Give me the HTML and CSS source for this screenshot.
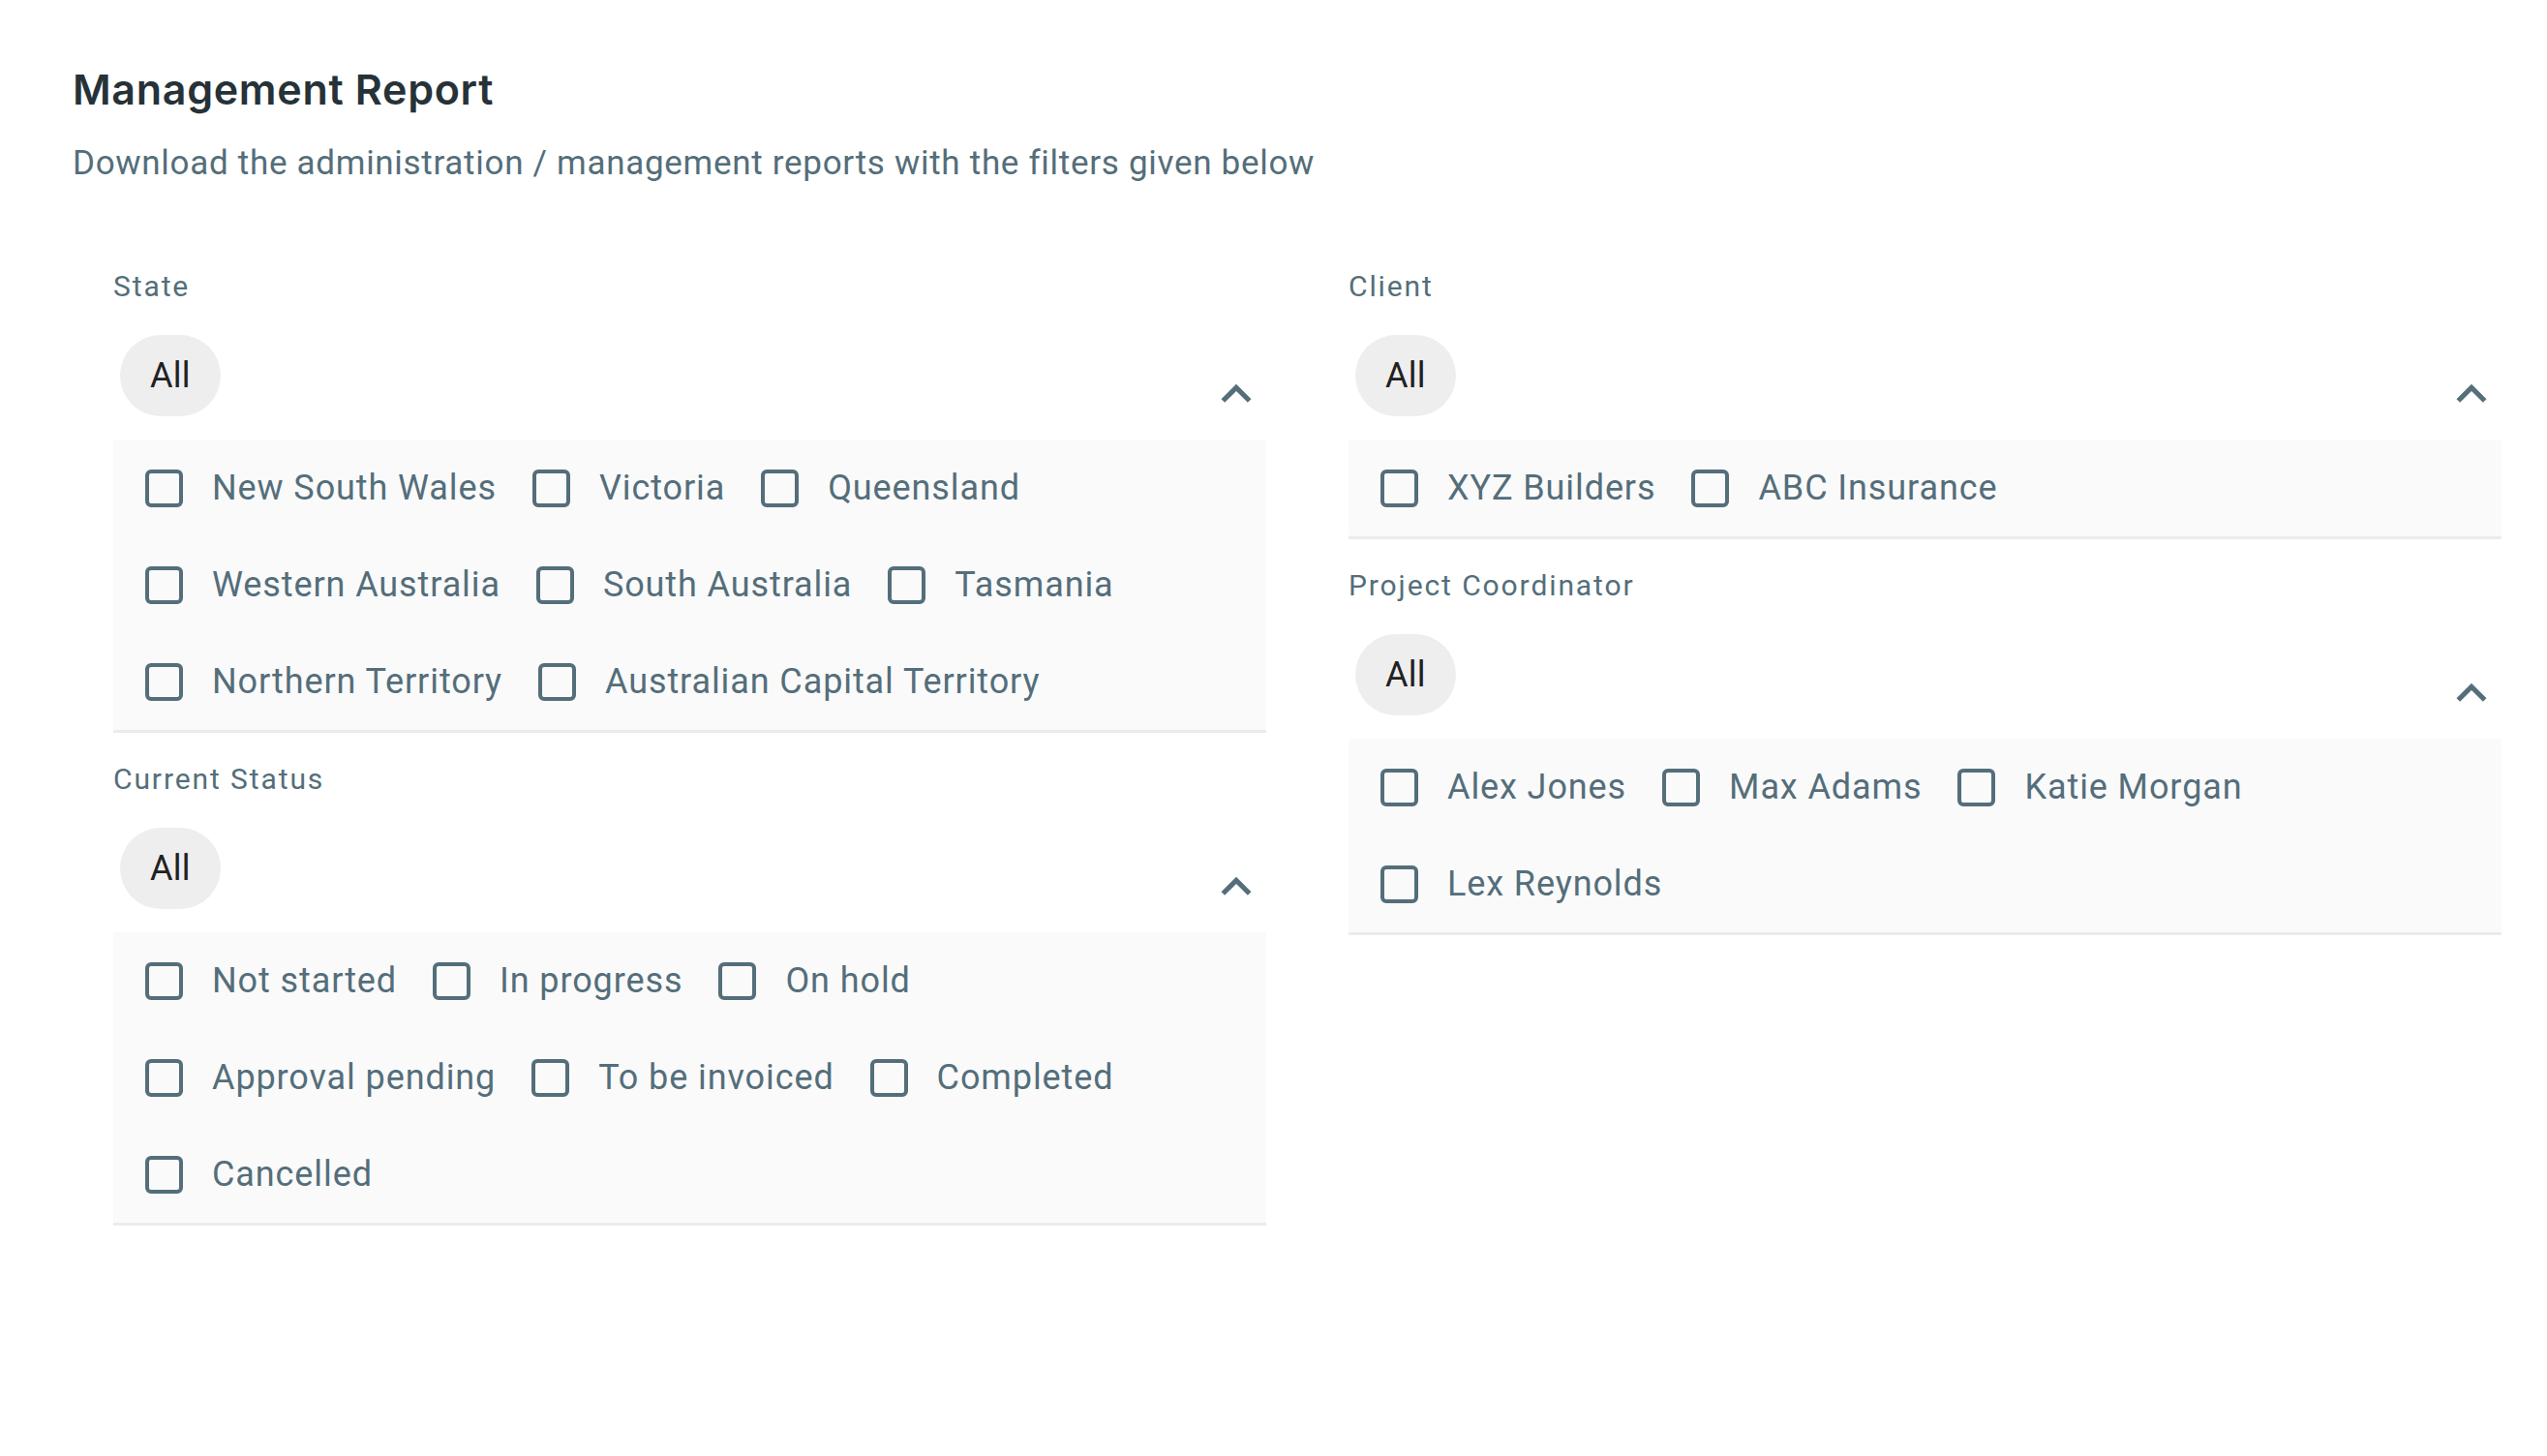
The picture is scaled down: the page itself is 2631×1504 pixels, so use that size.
FILE: index.html
```html
<!DOCTYPE html>
<html lang="en">
<head>
<meta charset="utf-8">
<title>Management Report</title>
<link rel="stylesheet" href="styles.css">
</head>
<body>
<main class="page">
  <header class="page-head">
    <h1 class="title">Management Report</h1>
    <p class="subtitle">Download the administration / management reports with the filters given below</p>
  </header>

  <div class="filters">
    <div class="column">
      <section class="filter">
        <div class="filter-label">State</div>
        <div class="filter-head">
          <span class="chip">All</span>
          <svg class="chevron" viewBox="0 0 24 24" aria-hidden="true"><path d="M12 8l-6 6 1.41 1.41L12 10.83l4.59 4.58L18 14z"/></svg>
        </div>
        <div class="options">
          <label class="option"><span class="box"></span><span class="text">New South Wales</span></label>
          <label class="option"><span class="box"></span><span class="text">Victoria</span></label>
          <label class="option"><span class="box"></span><span class="text">Queensland</span></label>
          <label class="option"><span class="box"></span><span class="text">Western Australia</span></label>
          <label class="option"><span class="box"></span><span class="text">South Australia</span></label>
          <label class="option"><span class="box"></span><span class="text">Tasmania</span></label>
          <label class="option"><span class="box"></span><span class="text">Northern Territory</span></label>
          <label class="option"><span class="box"></span><span class="text">Australian Capital Territory</span></label>
        </div>
      </section>

      <section class="filter">
        <div class="filter-label">Current Status</div>
        <div class="filter-head">
          <span class="chip">All</span>
          <svg class="chevron" viewBox="0 0 24 24" aria-hidden="true"><path d="M12 8l-6 6 1.41 1.41L12 10.83l4.59 4.58L18 14z"/></svg>
        </div>
        <div class="options">
          <label class="option"><span class="box"></span><span class="text">Not started</span></label>
          <label class="option"><span class="box"></span><span class="text">In progress</span></label>
          <label class="option"><span class="box"></span><span class="text">On hold</span></label>
          <label class="option"><span class="box"></span><span class="text">Approval pending</span></label>
          <label class="option"><span class="box"></span><span class="text">To be invoiced</span></label>
          <label class="option"><span class="box"></span><span class="text">Completed</span></label>
          <label class="option"><span class="box"></span><span class="text">Cancelled</span></label>
        </div>
      </section>
    </div>

    <div class="column">
      <section class="filter">
        <div class="filter-label">Client</div>
        <div class="filter-head">
          <span class="chip">All</span>
          <svg class="chevron" viewBox="0 0 24 24" aria-hidden="true"><path d="M12 8l-6 6 1.41 1.41L12 10.83l4.59 4.58L18 14z"/></svg>
        </div>
        <div class="options">
          <label class="option"><span class="box"></span><span class="text">XYZ Builders</span></label>
          <label class="option"><span class="box"></span><span class="text">ABC Insurance</span></label>
        </div>
      </section>

      <section class="filter">
        <div class="filter-label">Project Coordinator</div>
        <div class="filter-head">
          <span class="chip">All</span>
          <svg class="chevron" viewBox="0 0 24 24" aria-hidden="true"><path d="M12 8l-6 6 1.41 1.41L12 10.83l4.59 4.58L18 14z"/></svg>
        </div>
        <div class="options">
          <label class="option"><span class="box"></span><span class="text">Alex Jones</span></label>
          <label class="option"><span class="box"></span><span class="text">Max Adams</span></label>
          <label class="option"><span class="box"></span><span class="text">Katie Morgan</span></label>
          <label class="option"><span class="box"></span><span class="text">Lex Reynolds</span></label>
        </div>
      </section>
    </div>
  </div>
</main>
</body>
</html>
```

FILE: styles.css
```css
* {
  box-sizing: border-box;
}

html,
body {
  margin: 0;
  background: #ffffff;
}

body {
  font-family: Roboto, "Liberation Sans", Arial, sans-serif;
  color: #546e7a;
}

.page {
  padding: 66px 47px 0 75px;
}

.title {
  margin: 0;
  font-family: Inter, "Noto Sans", sans-serif;
  font-weight: 600;
  font-size: 43px;
  line-height: 52px;
  letter-spacing: 0.7px;
  color: #263238;
}

.subtitle {
  margin: 31px 0 0;
  font-size: 35px;
  line-height: 40px;
  letter-spacing: 0.7px;
  color: #546e7a;
}

.filters {
  display: grid;
  grid-template-columns: 1fr 1fr;
  column-gap: 85px;
  margin: 89px 0 0 42px;
}

.column {
  display: flex;
  flex-direction: column;
  gap: 30px;
}

.filter-label {
  font-size: 30px;
  line-height: 36px;
  letter-spacing: 1.9px;
  color: #546e7a;
}

.filter-head {
  display: flex;
  justify-content: space-between;
  align-items: flex-start;
  margin-top: 32px;
  height: 108px;
  padding-left: 7px;
}

.chip {
  display: inline-flex;
  align-items: center;
  justify-content: center;
  height: 84px;
  padding: 0 31px;
  border-radius: 42px;
  background: #eeeeee;
  color: #212121;
  font-size: 36px;
  letter-spacing: 0.3px;
}

.chevron {
  width: 62px;
  height: 62px;
  margin-top: 30px;
  fill: #546e7a;
}

.options {
  display: flex;
  flex-wrap: wrap;
  padding-left: 33px;
  background: #fafafa;
  border-bottom: 3px solid #ebebeb;
}

.option {
  display: flex;
  align-items: center;
  gap: 30px;
  height: 100px;
  margin-right: 37px;
}

.box {
  width: 39px;
  height: 39px;
  border: 4.5px solid #546e7a;
  border-radius: 6px;
  flex: none;
}

.text {
  font-size: 36px;
  letter-spacing: 0.9px;
  color: #546e7a;
  white-space: nowrap;
}
```
